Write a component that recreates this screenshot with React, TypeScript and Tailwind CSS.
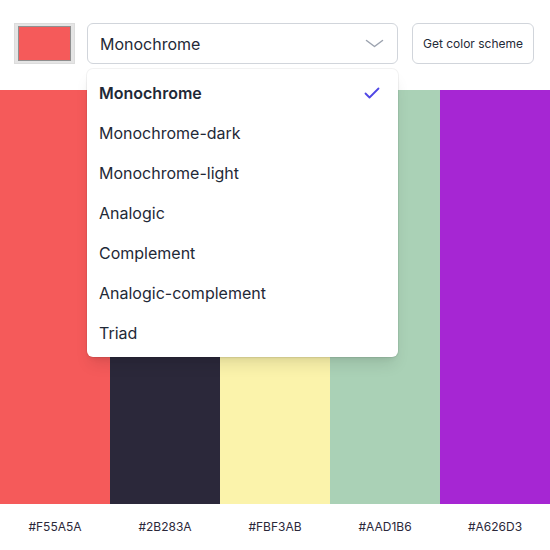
const colors = ['#F55A5A', '#2B283A', '#FBF3AB', '#AAD1B6', '#A626D3']

const modes = [
  'Monochrome',
  'Monochrome-dark',
  'Monochrome-light',
  'Analogic',
  'Complement',
  'Analogic-complement',
  'Triad',
]

export default function App() {
  return (
    <div className="w-[550px] h-[550px] flex flex-col bg-white font-['Inter',sans-serif] text-[#1f2937]">
      <header className="h-[90px] flex items-start pt-[23px] pl-[14px] pr-[16px] shrink-0">
        <div className="w-[61px] h-[41px] bg-[#e5e5e5] border border-[#dcdcdc] px-[3px] py-[2px] shrink-0">
          <div className="w-full h-full bg-[#F55A5A] border border-[#8f8f8f]" />
        </div>
        <div className="relative ml-[12px] flex-1">
          <div className="h-[41px] flex items-center justify-between rounded-md border border-[#d1d5db] bg-white pl-3 pr-[13px]">
            <span className="text-base text-[#1f2937]">Monochrome</span>
            <svg className="w-[19px] h-[19px] text-[#9ca3af]" viewBox="0 0 19 19" fill="none" stroke="currentColor" strokeWidth="1.5">
              <path d="M1.5 6.5l8 6 8-6" strokeLinecap="round" strokeLinejoin="round" />
            </svg>
          </div>
          <ul className="absolute left-0 right-0 top-[46px] z-10 py-1 rounded-md bg-white shadow-lg ring-1 ring-black/5">
            {modes.map((m, i) => (
              <li key={m} className="h-10 flex items-center justify-between pl-3 pr-4 text-base text-[#1f2937]">
                <span className={i === 0 ? 'font-semibold' : ''}>{m}</span>
                {i === 0 && (
                  <svg className="w-5 h-5 text-[#4f46e5]" viewBox="0 0 20 20" fill="none" stroke="currentColor" strokeWidth="1.8">
                    <path d="M3.5 10.5l4 4 9-9" strokeLinecap="round" strokeLinejoin="round" />
                  </svg>
                )}
              </li>
            ))}
          </ul>
        </div>
        <button className="ml-[14px] w-[122px] h-[41px] shrink-0 rounded-md border border-[#d1d5db] bg-white text-xs text-[#1f2937]">
          Get color scheme
        </button>
      </header>
      <div className="flex-1 flex">
        {colors.map(c => (
          <div key={c} className="flex-1" style={{ backgroundColor: c }} />
        ))}
      </div>
      <div className="h-[46px] flex shrink-0">
        {colors.map(c => (
          <div key={c} className="flex-1 flex items-center justify-center text-xs text-[#2B283A]">
            {c}
          </div>
        ))}
      </div>
    </div>
  )
}
